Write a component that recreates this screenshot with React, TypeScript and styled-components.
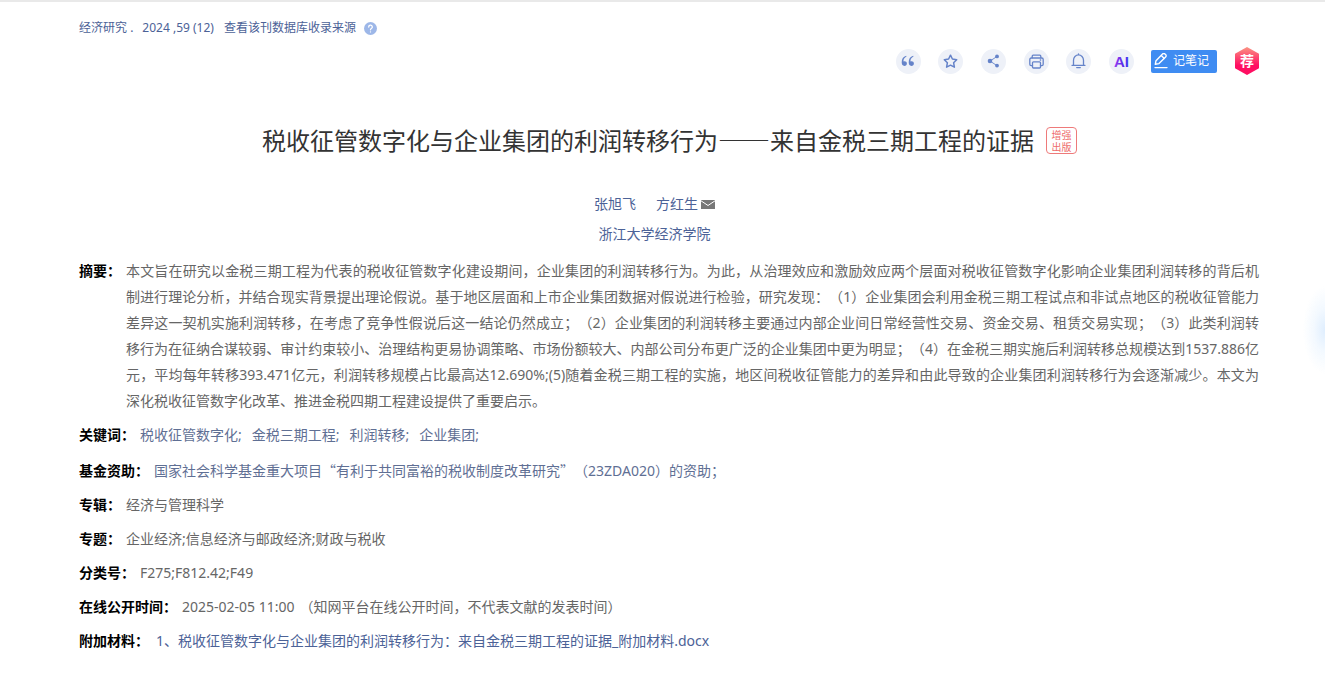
import React from "react";
import styled, { createGlobalStyle } from "styled-components";

const GlobalStyle = createGlobalStyle`
  * { box-sizing: border-box; }
  body {
    margin: 0;
    background: #fff;
    color: #666;
    font: 14px/26px "Noto Sans", "Noto Sans CJK SC", sans-serif;
    text-spacing-trim: space-all;
  }
  a { color: #4c6297; text-decoration: none; }
  a:hover { text-decoration: underline; }
  button { font: inherit; border: 0; padding: 0; cursor: pointer; }
`;

const Page = styled.main`
  border-top: 2px solid #e9e9e9;
  padding: 15px 65px 24px 79px;
`;

const Source = styled.nav`
  display: flex;
  align-items: center;
  gap: 8px;
  height: 22px;
  font-size: 12px;
  line-height: 22px;
  color: #4c6297;
`;

const Journal = styled.span`
  display: flex;
  gap: 9px;
  margin-right: 2px;
`;

const Help = styled.button`
  display: block;
  width: 13px;
  height: 13px;
  border-radius: 50%;
  background: #9db7e8;
  color: #fff;
  svg { display: block; }
`;

const Toolbar = styled.div`
  display: flex;
  align-items: center;
  justify-content: flex-end;
  height: 28px;
  margin-top: 8px;
  padding-right: 1px;
`;

const ToolGroup = styled.div`
  display: grid;
  grid-template-columns: repeat(6, 1fr);
  justify-items: center;
  width: 256px;
  margin-right: 8px;
`;

const Tool = styled.button`
  display: grid;
  place-items: center;
  width: 25px;
  height: 25px;
  border-radius: 50%;
  background: #eef1f8;
  color: #6583c9;
`;

const NoteButton = styled.button`
  display: flex;
  align-items: center;
  gap: 5px;
  width: 66px;
  height: 23px;
  padding: 0 3px;
  margin-right: 18px;
  border-radius: 2px;
  background: #3f8cf2;
  color: #fff;
  font-size: 12px;
  line-height: 22px;
  white-space: nowrap;
`;

const Recommend = styled.button`
  display: grid;
  place-items: center;
  width: 24px;
  height: 28px;
  background: linear-gradient(#fb9483, #ff0f62 65%);
  clip-path: polygon(50% 0, 100% 24%, 100% 76%, 50% 100%, 0 76%, 0 24%);
  color: #fff;
  font-size: 14px;
  font-weight: 700;
  line-height: 28px;
`;

const TitleRow = styled.header`
  display: flex;
  justify-content: center;
  align-items: center;
  gap: 12px;
  margin-top: 46px;
`;

const Title = styled.h1`
  margin: 0;
  color: #333;
  font-size: 24px;
  font-weight: 400;
  line-height: 40px;
`;

const Dash = styled.span`
  font-family: "Noto Sans CJK SC", sans-serif;
  font-size: 26px;
  line-height: 1;
`;

const Badge = styled.span`
  width: 31px;
  height: 27px;
  margin-bottom: 2px;
  padding: 1px 0;
  border: 1px solid #ee7a7a;
  border-radius: 4px;
  color: #ee6c6c;
  font-size: 10px;
  line-height: 12px;
  text-align: center;
`;

const Byline = styled.div`
  display: flex;
  justify-content: center;
  align-items: center;
  gap: 20px;
  height: 30px;
  padding-right: 30px;
`;

const Authors = styled(Byline)`
  margin-top: 28px;
`;

const Author = styled.span`
  display: flex;
  align-items: center;
  gap: 3px;
`;

const Details = styled.dl`
  margin: 9px 0 0;
`;

const Row = styled.div<{ $gap?: number; $after?: number }>`
  display: flex;
  gap: ${(p) => p.$gap ?? 5}px;
  margin-bottom: ${(p) => p.$after ?? 8}px;
`;

const Label = styled.dt`
  flex: none;
  color: #000;
  font-weight: 700;
`;

const Value = styled.dd`
  flex: 1;
  margin: 0;
`;

const Abstract = styled(Value)`
  padding-right: 1px;
  text-align: justify;
`;

const Keyword = styled.a`
  && { color: #5f6f94; }
  margin-right: 10px;
`;

const Fund = styled.a`
  && { color: #5f6f94; }
`;

const Quote = styled.span`
  font-family: "Noto Sans CJK SC", sans-serif;
  line-height: 1;
`;

const Time = styled.time`
  margin-right: 5px;
`;

const Glow = styled.div`
  position: fixed;
  right: 0;
  top: 280px;
  width: 22px;
  height: 100px;
  background: radial-gradient(22px 44px at 100% 50%, #dfeefe, #f3f9ff 50%, transparent);
  pointer-events: none;
`;

const stroke = {
  fill: "none",
  stroke: "currentColor",
  strokeWidth: 1.3,
  strokeLinecap: "round" as const,
  strokeLinejoin: "round" as const,
};

const QuoteIcon = () => (
  <svg width="14" height="12" viewBox="0 0 14 12" fill="currentColor">
    <path d="M5.2.8C2.1 1.7.7 4 .7 7.3c0 2.2 1 3.6 2.7 3.6 1.5 0 2.5-1 2.5-2.4S4.9 6.2 3.5 6.2c-.5 0-.8.1-1.1.2C2.5 4.2 3.4 2.7 5.5 1.6z" />
    <path d="M12.2.8C9.1 1.7 7.7 4 7.7 7.3c0 2.2 1 3.6 2.7 3.6 1.5 0 2.5-1 2.5-2.4s-1-2.3-2.4-2.3c-.5 0-.8.1-1.1.2.1-2.2 1-3.7 3.1-4.8z" />
  </svg>
);

const StarIcon = () => (
  <svg width="15" height="15" viewBox="0 0 15 15" {...stroke} strokeWidth={1.5}>
    <path d="M7.5 1.2 9.4 5l4.3.7-3.1 3 .8 4.5-3.900-2-3.900 2 .8-4.500-3.100-3L5.600 5z" />
  </svg>
);

const ShareIcon = () => (
  <svg width="13" height="14" viewBox="0 0 13 14" fill="currentColor">
    <path d="M10 2.500 3 7l7 4.700" fill="none" stroke="currentColor" strokeWidth="0.9" />
    <circle cx="3" cy="7" r="2.300" />
    <circle cx="10" cy="2.400" r="1.900" />
    <circle cx="10" cy="11.600" r="1.900" />
  </svg>
);

const PrintIcon = () => (
  <svg width="15" height="15" viewBox="0 0 15 15" {...stroke}>
    <path d="M3.200 3.800V2.200q0-1 1-1h6.600q1 0 1 1v1.600" />
    <path d="M3.500 11.700H2.200q-1.400 0-1.400-1.400V5.400Q.8 4 2.200 4h10.600q1.400 0 1.400 1.400v4.900q0 1.400-1.400 1.400h-1.300" />
    <rect x="3.500" y="7.800" width="8" height="6.200" rx="1" />
    <path d="M11.300 6h.4" />
  </svg>
);

const BellIcon = () => (
  <svg width="15" height="16" viewBox="0 0 15 16" {...stroke}>
    <path d="M7.500.8v1.100M2.500 12V7.200a5 5.300 0 0 1 10 0V12M1 12.300h13M5.700 14.600h3.600" />
  </svg>
);

const AiIcon = () => (
  <svg width="21" height="21" viewBox="0 0 21 21" aria-hidden="true">
    <defs>
      <linearGradient id="ai" x1="0" x2="1">
        <stop offset="0" stopColor="#9b3df0" />
        <stop offset="0.6" stopColor="#5b2be8" />
        <stop offset="1" stopColor="#3a3cf5" />
      </linearGradient>
    </defs>
    <text x="10.500" y="16" textAnchor="middle" fontFamily="Liberation Sans, sans-serif" fontWeight="700" fontSize="15" fill="url(#ai)">
      AI
    </text>
  </svg>
);

const PenIcon = () => (
  <svg width="14" height="17" viewBox="0 0 14 17" {...stroke} strokeWidth={1.4}>
    <path d="m1.300 11.300.7-3.600L8.500 1a1.700 1.700 0 0 1 2.500 0l.6.6a1.700 1.700 0 0 1 0 2.500L5 10.600zM7.500 2.800l2.800 2.800M1 14.600h12" />
  </svg>
);

const MailIcon = () => (
  <svg width="14" height="9" viewBox="0 0 14 9" role="img" aria-label="通讯作者">
    <rect width="14" height="9" fill="#777" />
    <path d="m0 .8 7 4.700 7-4.700" fill="none" stroke="#fff" strokeWidth="1" />
  </svg>
);

const tools = [
  { label: "引用", Icon: QuoteIcon },
  { label: "收藏", Icon: StarIcon },
  { label: "分享", Icon: ShareIcon },
  { label: "打印", Icon: PrintIcon },
  { label: "关注", Icon: BellIcon },
  { label: "AI", Icon: AiIcon },
];

const keywords = ["税收征管数字化", "金税三期工程", "利润转移", "企业集团"];

export default function App() {
  return (
    <>
      <GlobalStyle />
      <Page lang="zh-CN">
        <Source>
          <Journal>
            <span>
              <a href="#journal">经济研究</a> .
            </span>
            <a href="#issue">2024 ,59 (12)</a>
          </Journal>
          <a href="#database">查看该刊数据库收录来源</a>
          <Help aria-label="帮助">
            <svg width="13" height="13" viewBox="0 0 13 13" {...stroke}>
              <path d="M4.700 5a1.800 1.800 0 1 1 2.700 1.500c-.7.4-.9.7-.9 1.300M6.500 9.800v.1" />
            </svg>
          </Help>
        </Source>

        <Toolbar>
          <ToolGroup>
            {tools.map(({ label, Icon }) => (
              <Tool key={label} aria-label={label}>
                <Icon />
              </Tool>
            ))}
          </ToolGroup>
          <NoteButton>
            <PenIcon />
            记笔记
          </NoteButton>
          <Recommend>荐</Recommend>
        </Toolbar>

        <TitleRow>
          <Title>
            税收征管数字化与企业集团的利润转移行为<Dash>——</Dash>来自金税三期工程的证据
          </Title>
          <Badge>增强出版</Badge>
        </TitleRow>

        <Authors>
          <Author>
            <a href="#zhang">张旭飞</a>
          </Author>
          <Author>
            <a href="#fang">方红生</a>
            <MailIcon />
          </Author>
        </Authors>
        <Byline>
          <a href="#school">浙江大学经济学院</a>
        </Byline>

        <Details>
          <Row>
            <Label>摘要：</Label>
            <Abstract>
              本文旨在研究以金税三期工程为代表的税收征管数字化建设期间，企业集团的利润转移行为。为此，从治理效应和激励效应两个层面对税收征管数字化影响企业集团利润转移的背后机制进行理论分析，并结合现实背景提出理论假说。基于地区层面和上市企业集团数据对假说进行检验，研究发现：（1）企业集团会利用金税三期工程试点和非试点地区的税收征管能力差异这一契机实施利润转移，在考虑了竞争性假说后这一结论仍然成立；（2）企业集团的利润转移主要通过内部企业间日常经营性交易、资金交易、租赁交易实现；（3）此类利润转移行为在征纳合谋较弱、审计约束较小、治理结构更易协调策略、市场份额较大、内部公司分布更广泛的企业集团中更为明显；（4）在金税三期实施后利润转移总规模达到1537.886亿元，平均每年转移393.471亿元，利润转移规模占比最高达12.690%;(5)随着金税三期工程的实施，地区间税收征管能力的差异和由此导致的企业集团利润转移行为会逐渐减少。本文为深化税收征管数字化改革、推进金税四期工程建设提供了重要启示。
            </Abstract>
          </Row>
          <Row $after={10}>
            <Label>关键词：</Label>
            <Value>
              {keywords.map((word) => (
                <Keyword key={word} href="#keyword">{word};</Keyword>
              ))}
            </Value>
          </Row>
          <Row>
            <Label>基金资助：</Label>
            <Value>
              <Fund href="#fund">
                国家社会科学基金重大项目<Quote>“</Quote>有利于共同富裕的税收制度改革研究<Quote>”</Quote>（23ZDA020）的资助；
              </Fund>
            </Value>
          </Row>
          <Row>
            <Label>专辑：</Label>
            <Value>经济与管理科学</Value>
          </Row>
          <Row>
            <Label>专题：</Label>
            <Value>企业经济;信息经济与邮政经济;财政与税收</Value>
          </Row>
          <Row>
            <Label>分类号：</Label>
            <Value>F275;F812.42;F49</Value>
          </Row>
          <Row>
            <Label>在线公开时间：</Label>
            <Value>
              <Time>2025-02-05 11:00</Time>（知网平台在线公开时间，不代表文献的发表时间）
            </Value>
          </Row>
          <Row $gap={7}>
            <Label>附加材料：</Label>
            <Value>
              <a href="#attachment">1、税收征管数字化与企业集团的利润转移行为：来自金税三期工程的证据_附加材料.docx</a>
            </Value>
          </Row>
        </Details>
      </Page>
      <Glow />
    </>
  );
}
